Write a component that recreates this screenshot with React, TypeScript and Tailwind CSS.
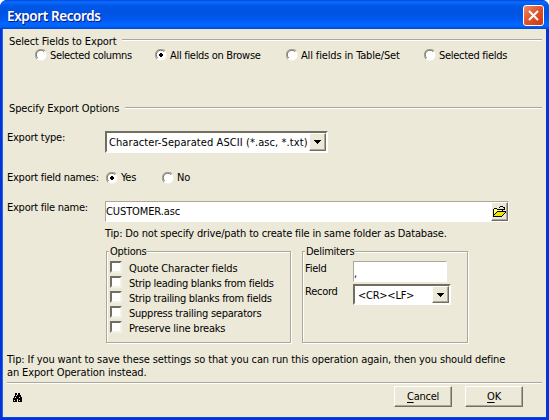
import type { ReactNode } from 'react';

const sunken = 'border border-t-[#aca899] border-l-[#aca899] border-r-white border-b-white bg-white';
const raised = 'border border-t-white border-l-white border-r-[#716f64] border-b-[#716f64] bg-[#ece9d8] shadow-[inset_-1px_-1px_0_#aca899]';

function Rule() {
  return <div className="h-[2px] flex-1 border-b border-white bg-[#aca899]" />;
}

function Radio({ checked = false, className = '', children }: { checked?: boolean; className?: string; children: ReactNode }) {
  return (
    <label className={`flex items-center gap-[3px] ${className}`}>
      <svg width="12" height="12" viewBox="0 0 12 12" className="shrink-0">
        <circle cx="6" cy="6" r="5.5" fill="#fff" />
        <path d="M2 10A5.6 5.6 0 0 1 10 2" fill="none" stroke="#aca899" strokeWidth="1.2" />
        <path d="M2.6 9A4.5 4.5 0 0 1 9 2.6" fill="none" stroke="#716f64" strokeWidth="1" />
        {checked && <path d="M5 4h2v1h1v2h-1v1h-2v-1h-1v-2h1z" fill="#000" />}
      </svg>
      <span>{children}</span>
    </label>
  );
}

function Select({ className, children }: { className: string; children: ReactNode }) {
  return (
    <div className={`flex border-2 border-t-[#716f64] border-l-[#716f64] border-r-white border-b-white bg-white ${className}`}>
      <span className="flex-1 overflow-hidden">{children}</span>
      <span className={`flex w-[17px] shrink-0 items-center justify-center ${raised}`}>
        <svg width="7" height="4" viewBox="0 0 7 4" shapeRendering="crispEdges"><path d="M0 0h7L3.5 4z" /></svg>
      </span>
    </div>
  );
}

function Group({ title, className, children }: { title: string; className: string; children: ReactNode }) {
  return (
    <div className={`relative h-[92px] border border-[#aca899] shadow-[1px_1px_0_#fff,inset_1px_1px_0_#fff] ${className}`}>
      <span className="absolute -top-[7px] left-[2px] bg-[#ece9d8] pl-px">{title}</span>
      {children}
    </div>
  );
}

const options = [
  { text: 'Quote Character fields', spacing: 'tracking-[-0.15px]' },
  { text: 'Strip leading blanks from fields', spacing: 'tracking-[-0.3px]' },
  { text: 'Strip trailing blanks from fields', spacing: 'tracking-[-0.3px]' },
  { text: 'Suppress trailing separators', spacing: 'tracking-[-0.25px]' },
  { text: 'Preserve line breaks', spacing: 'tracking-[-0.2px]' },
];

export default function App() {
  return (
    <div className="flex h-[420px] w-[549px] flex-col overflow-hidden rounded-t-[7px] bg-[#0831d9] font-['DejaVu_Sans_Condensed','DejaVu_Sans',sans-serif] text-[11px] leading-[13px] tracking-[-0.25px] whitespace-nowrap text-black">
      <header className="flex h-[29px] shrink-0 items-center justify-between bg-[linear-gradient(#0048d8_0%,#0a6cff_7%,#0058e8_18%,#0053e1_45%,#0058f0_65%,#0066ff_82%,#0061fa_92%,#0044cc_100%)] pr-[5px] pl-[7px]">
        <h1 className="pt-[3px] font-['Noto_Sans',sans-serif] text-[13.5px] leading-[16px] font-semibold tracking-[-0.4px] text-white [text-shadow:1px_1px_0_#0a1883]">Export Records</h1>
        <button className="mt-[2px] flex size-[21px] items-center justify-center rounded-[3px] border border-white bg-[linear-gradient(135deg,#ee8a6b,#e0512b_50%,#c93a10)]">
          <svg width="13" height="13" viewBox="0 0 13 13"><path d="M2 2l9 9M11 2l-9 9" stroke="#fff" strokeWidth="2" /></svg>
        </button>
      </header>
      <main className="mr-[3px] ml-[3px] h-[388px] shrink-0 bg-[#ece9d8] pr-1 pl-1 shadow-[-1px_0_0_#166aee,0_1px_0_#0048e0]">
        <div className="flex h-[18px] items-start gap-[6px] pt-[6px] pl-[2px]"><span className="tracking-[-0.12px]">Select Fields to Export</span><div className="flex flex-1 pt-[4px]"><Rule /></div></div>
        <div className="flex h-[15px] pl-[28px] pt-px">
          <Radio className="w-[120px] gap-[2px] tracking-[-0.37px]">Selected columns</Radio>
          <Radio className="w-[131px] tracking-[-0.3px]" checked>All fields on Browse</Radio>
          <Radio className="w-[138px] tracking-[-0.15px]">All fields in Table/Set</Radio>
          <Radio className="tracking-[-0.3px]">Selected fields</Radio>
        </div>
        <div className="mt-[40px] flex h-[14px] items-start gap-[6px] pl-[2px]"><span className="tracking-[-0.12px]">Specify Export Options</span><div className="flex flex-1 pt-[5px]"><Rule /></div></div>
        <div className="mt-[15px] flex h-[22px]">
          <span className="w-[98px]">Export type:</span>
          <Select className="h-[22px] w-[223px] pl-[2px] leading-[19px] tracking-[0.08px]">Character-Separated ASCII (*.asc, *.txt)</Select>
        </div>
        <div className="mt-[18px] flex h-[13px]">
          <span className="w-[99px]">Export field names:</span>
          <Radio className="w-[56px]" checked>Yes</Radio>
          <Radio>No</Radio>
        </div>
        <div className="mt-[17px] flex h-[21px]">
          <span className="w-[98px]">Export file name:</span>
          <div className={`flex h-[21px] w-[404px] ${sunken}`}>
            <span className="flex-1 leading-[20px] tracking-[-0.1px]">CUSTOMER.asc</span>
            <span className={`flex h-[19px] w-[17px] items-center justify-center ${raised}`}>
              <svg width="13" height="11" viewBox="0 0 13 11" shapeRendering="crispEdges">
                <path d="M1 3h3v1h5v2H4v1H3v2H1z" fill="#ffff70" />
                <path d="M4 6h8v1h-1v2h-1v1H1V9h1V8h1V7h1z" fill="#f0e800" />
                <path d="M1 2h3v1H1zM0 3h1v7H0zM4 3h5v1H4zM9 4h1v1H9zM4 5h9v1H4zM3 6h1v1H3zM2 7h1v1H2zM1 8h1v1H1zM12 6h1v1h-1zM11 7h1v1h-1zM10 8h1v1h-1zM9 9h1v1H9zM0 10h9v1H0zM6 1h1v1H6zM7 0h3v1H7zM10 1h1v1h-1zM11 1h1v3H9V3h2z" fill="#000" />
              </svg>
            </span>
          </div>
        </div>
        <p className="mt-[5px] h-[13px] pl-[98px] tracking-[-0.17px]">Tip: Do not specify drive/path to create file in same folder as Database.</p>
        <div className="mt-[11px] flex gap-[11px] pl-[99px]">
          <Group title="Options" className="w-[185px]">
            <div className="pt-[9px] pl-[3px]">
              {options.map((o) => (
                <label key={o.text} className="flex h-[15px] items-start gap-[7px]">
                  <span className="size-[12px] border-2 border-t-[#716f64] border-r-[#f4f2e8] border-b-[#f4f2e8] border-l-[#716f64] bg-white" />
                  <span className={`pt-px ${o.spacing}`}>{o.text}</span>
                </label>
              ))}
            </div>
          </Group>
          <Group title="Delimiters" className="w-[166px]">
            <div className="flex flex-col gap-[2px] pt-[9px] pl-[2px]">
              <div className="flex h-[21px]"><span className="w-[48px] pt-px">Field</span><div className={`h-[21px] w-[94px] leading-[24px] ${sunken}`}>,</div></div>
              <div className="flex h-[21px]"><span className="w-[48px] pt-px">Record</span><Select className="h-[21px] w-[98px] pl-[3px] leading-[19px]">&lt;CR&gt;&lt;LF&gt;</Select></div>
            </div>
          </Group>
        </div>
        <p className="mt-[10px] h-[29px] tracking-[-0.125px]">Tip: If you want to save these settings so that you can run this operation again, then you should define<br />an Export Operation instead.</p>
        <div className="flex"><Rule /></div>
        <footer className="flex pt-[2px] pl-[6px]">
          <svg className="mt-[7px]" width="9" height="9" viewBox="0 0 9 9" shapeRendering="crispEdges">
            <path d="M2 0h2v2h1V0h2v2h1v2h1v5H5V6H4v3H0V5h1V3h1z" fill="#000" />
            <path d="M3 2h1v1H3zM2 4h1v1H2zM6 4h1v1H6zM1 7h1v1H1zM6 7h1v1H6z" fill="#ece9d8" />
          </svg>
          <button className={`ml-[372px] h-[21px] w-[58px] ${raised}`}><u className="underline-offset-2">C</u>ancel</button>
          <button className={`ml-[13px] h-[21px] w-[58px] ${raised}`}><u className="underline-offset-2">O</u>K</button>
        </footer>
      </main>
    </div>
  );
}
